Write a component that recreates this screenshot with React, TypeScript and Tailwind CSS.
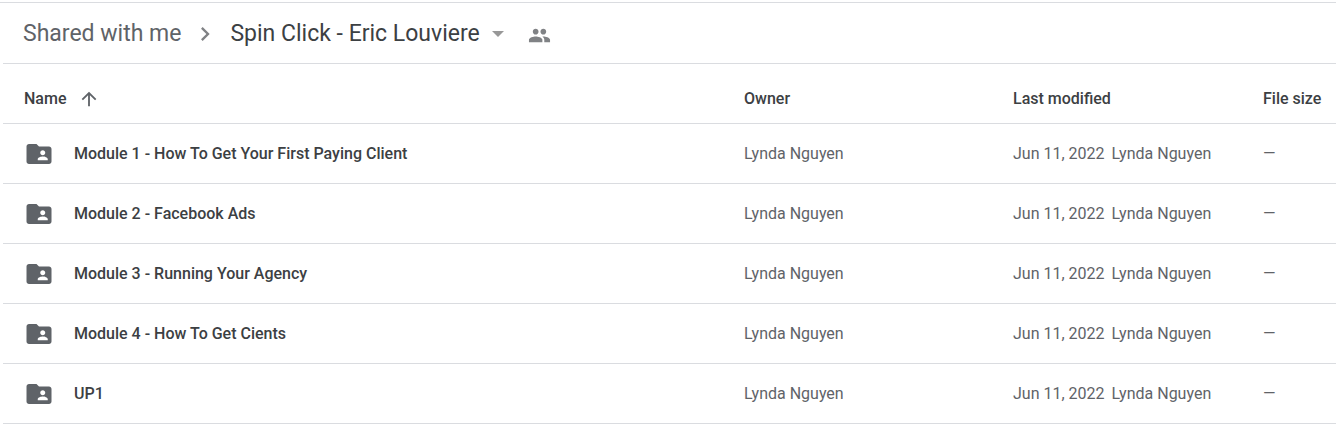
interface Folder {
  name: string
  owner: string
  date: string
}

const folders: Folder[] = [
  'Module 1 - How To Get Your First Paying Client',
  'Module 2 - Facebook Ads',
  'Module 3 - Running Your Agency',
  'Module 4 - How To Get Cients',
  'UP1',
].map((name) => ({ name, owner: 'Lynda Nguyen', date: 'Jun 11, 2022' }))

function Icon({ d, className }: { d: string; className: string }) {
  return (
    <svg viewBox="0 0 24 24" fill="currentColor" className={`shrink-0 ${className}`} aria-hidden="true">
      <path d={d} />
    </svg>
  )
}

const CHEVRON = 'M10 6 8.59 7.41 13.17 12l-4.58 4.59L10 18l6-6z'
const CARET = 'M6 9h12l-6 6z'
const ARROW_UP = 'M4 12l1.41 1.41L11 7.83V20h2V7.83l5.58 5.59L20 12l-8-8-8 8z'
const PEOPLE =
  'M16 11c1.66 0 2.99-1.34 2.99-3S17.66 5 16 5c-1.66 0-3 1.34-3 3s1.34 3 3 3zm-8 0c1.66 0 2.99-1.34 2.99-3S9.66 5 8 5C6.34 5 5 6.34 5 8s1.34 3 3 3zm0 2c-2.33 0-7 1.17-7 3.5V19h14v-2.5c0-2.33-4.67-3.5-7-3.5zm8 0c-.29 0-.62.02-.97.05 1.16.84 1.97 1.97 1.97 3.45V19h6v-2.5c0-2.33-4.67-3.5-7-3.5z'
const FOLDER_SHARED =
  'M20 6h-8l-2-2H4c-1.1 0-1.99.9-1.99 2L2 18c0 1.1.9 2 2 2h16c1.1 0 2-.9 2-2V8c0-1.1-.9-2-2-2zm-5 3c1.1 0 2 .9 2 2s-.9 2-2 2-2-.9-2-2 .9-2 2-2zm4 8h-8v-1c0-1.33 2.67-2 4-2s4 .67 4 2v1z'

export default function App() {
  return (
    <main className="bg-white pt-[2px] font-['Roboto',sans-serif] text-base text-[#5f6368]">
      {/* Breadcrumb */}
      <nav className="border-t border-[#dadce0] pl-[3px]" aria-label="Breadcrumb">
        <div className="flex h-[61px] items-center border-b border-[#dadce0] pt-0.5 pl-5 text-[23px]">
          <a href="#shared">Shared with me</a>
          <Icon d={CHEVRON} className="mr-[11px] ml-2.5 size-7 text-[#808285]" />
          <button type="button" className="flex cursor-pointer items-center gap-[6px] text-[#3c4043]">
            Spin Click - Eric Louviere
            <Icon d={CARET} className="size-6 text-[#989898]" />
          </button>
          <button type="button" className="mt-0.5 ml-[18px] cursor-pointer text-[#808285]" aria-label="Manage access">
            <Icon d={PEOPLE} className="size-[23px]" />
          </button>
        </div>
      </nav>

      {/* File list */}
      <div className="pl-[3px]">
        <table className="w-full table-fixed text-left">
          <thead className="text-[#3c4043]">
            <tr className="h-[59px] border-b border-[#dadce0]">
              <th className="pt-3 pl-[21px] font-medium">
                <button type="button" className="flex cursor-pointer items-center gap-3">
                  Name
                  <Icon d={ARROW_UP} className="size-[22px] text-[#5f6368]" />
                </button>
              </th>
              <th className="w-[269px] pt-3 font-medium">Owner</th>
              <th className="w-[250px] pt-3 font-medium">Last modified</th>
              <th className="w-[73px] pt-3 font-medium whitespace-nowrap">File size</th>
            </tr>
          </thead>
          <tbody>
            {folders.map((f) => (
              <tr key={f.name} className="h-[60px] border-b border-[#dadce0]">
                <td className="pt-px pl-[21px]">
                  <div className="flex items-center gap-5 font-medium text-[#3c4043]">
                    <Icon d={FOLDER_SHARED} className="size-[30px] text-[#5f6368]" />
                    {f.name}
                  </div>
                </td>
                <td className="pt-px">{f.owner}</td>
                <td className="pt-px">
                  <span className="mr-[7px]">{f.date}</span>
                  <span>{f.owner}</span>
                </td>
                <td className="pt-px">—</td>
              </tr>
            ))}
          </tbody>
        </table>
      </div>
    </main>
  )
}
